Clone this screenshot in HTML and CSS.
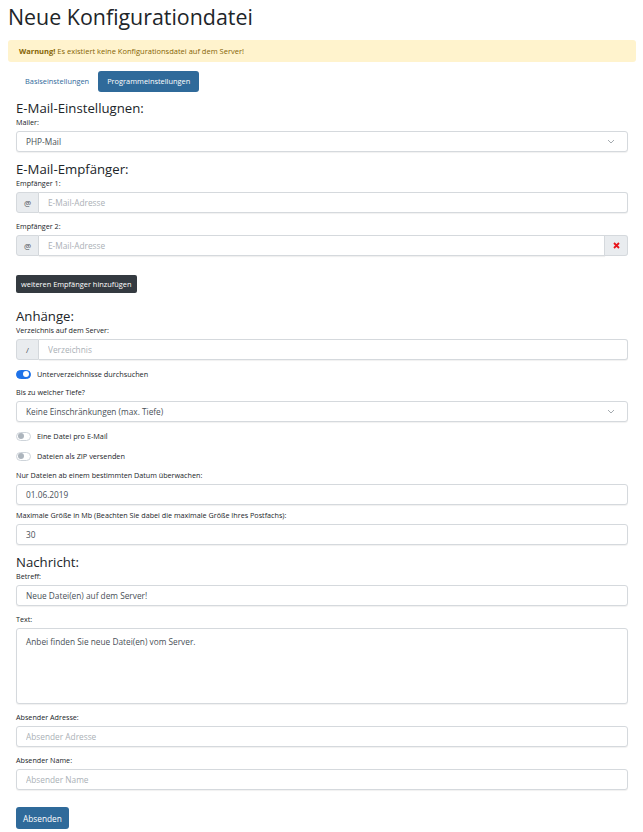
FILE: index.html
```html
<!DOCTYPE html>
<html lang="de">
<head>
    <meta charset="UTF-8">
    <meta name="viewport" content="width=device-width, initial-scale=1.0">
    <title>Neue Konfigurationdatei</title>
    <link rel="stylesheet" href="styles.css">
</head>
<body>
    <h1>Neue Konfigurationdatei</h1>
    <div class="alert"><strong>Warnung!</strong> Es existiert keine Konfigurationsdatei auf dem Server!</div>

    <div class="tabs">
        <a class="tab">Basiseinstellungen</a>
        <a class="tab active">Programmeinstellungen</a>
    </div>

    <form class="config-form">
        <h4>E-Mail-Einstellugnen:</h4>
        <div class="group">
            <label>Mailer:</label>
            <div class="select">
                <span>PHP-Mail</span>
                <svg width="8" height="5" viewBox="0 0 8 5"><path d="M1 1l3 3 3-3" fill="none" stroke="#9aa0a6" stroke-width="0.9"/></svg>
            </div>
        </div>

        <h4>E-Mail-Empfänger:</h4>
        <div class="group">
            <label>Empfänger 1:</label>
            <div class="input-group">
                <span class="addon">@</span>
                <input type="text" placeholder="E-Mail-Adresse">
            </div>
        </div>
        <div class="group">
            <label>Empfänger 2:</label>
            <div class="input-group">
                <span class="addon">@</span>
                <input type="text" placeholder="E-Mail-Adresse">
                <span class="addon addon-right">
                    <svg width="7" height="7" viewBox="0 0 7 7"><path d="M1 1l5 5M6 1l-5 5" stroke="#e8141b" stroke-width="1.8"/></svg>
                </span>
            </div>
        </div>
        <button type="button" class="btn-dark">weiteren Empfänger hinzufügen</button>

        <h4>Anhänge:</h4>
        <div class="group">
            <label>Verzeichnis auf dem Server:</label>
            <div class="input-group">
                <span class="addon">/</span>
                <input type="text" placeholder="Verzeichnis">
            </div>
        </div>
        <div class="switch-row first">
            <span class="switch on"></span>
            <span>Unterverzeichnisse durchsuchen</span>
        </div>
        <div class="group">
            <label>Bis zu welcher Tiefe?</label>
            <div class="select">
                <span>Keine Einschränkungen (max. Tiefe)</span>
                <svg width="8" height="5" viewBox="0 0 8 5"><path d="M1 1l3 3 3-3" fill="none" stroke="#9aa0a6" stroke-width="0.9"/></svg>
            </div>
        </div>
        <div class="switch-row">
            <span class="switch"></span>
            <span>Eine Datei pro E-Mail</span>
        </div>
        <div class="switch-row last">
            <span class="switch"></span>
            <span>Dateien als ZIP versenden</span>
        </div>
        <div class="group short">
            <label>Nur Dateien ab einem bestimmten Datum überwachen:</label>
            <input type="text" value="01.06.2019">
        </div>
        <div class="group">
            <label>Maximale Größe in Mb (Beachten Sie dabei die maximale Größe Ihres Postfachs):</label>
            <input type="text" value="30">
        </div>

        <h4>Nachricht:</h4>
        <div class="group">
            <label>Betreff:</label>
            <input type="text" value="Neue Datei(en) auf dem Server!">
        </div>
        <div class="group">
            <label>Text:</label>
            <textarea>Anbei finden Sie neue Datei(en) vom Server.</textarea>
        </div>
        <div class="group">
            <label>Absender Adresse:</label>
            <input type="text" placeholder="Absender Adresse">
        </div>
        <div class="group">
            <label>Absender Name:</label>
            <input type="text" placeholder="Absender Name">
        </div>
        <button type="button" class="btn-primary">Absenden</button>
    </form>
</body>
</html>
```

FILE: styles.css
```css
body {
    margin: 0;
    padding: 0 7px 0 8px;
    font-family: "Open Sans", "Noto Sans", sans-serif;
    color: #212529;
    background: #ffffff;
}

h1 {
    font-size: 21.4px;
    font-weight: 400;
    line-height: 30px;
    margin: 2px 0 8px;
}

.alert {
    height: 22px;
    line-height: 22px;
    padding: 0 11px;
    font-size: 7.5px;
    color: #856404;
    background-color: #fff3cd;
    border-radius: 3px;
}

.tabs {
    display: flex;
    align-items: center;
    margin: 9px 0 0 8px;
    height: 21px;
}

.tab {
    font-size: 7.4px;
    color: #2f6a9a;
    padding: 0 9px;
    line-height: 21px;
    border-radius: 3px;
}

.tab.active {
    color: #ffffff;
    background-color: #2f6a9a;
}

.config-form {
    padding: 0 8px;
}

h4 {
    font-size: 13.2px;
    font-weight: 400;
    line-height: 18px;
    margin: 7px 0 0;
}

label {
    display: block;
    font-size: 7.2px;
    line-height: 11px;
    margin-bottom: 3px;
}

.group {
    margin-bottom: 8px;
}

.group.short {
    margin-bottom: 5px;
}

input, textarea, .select {
    display: block;
    box-sizing: border-box;
    width: 100%;
    height: 21px;
    padding: 0 9px;
    font-family: inherit;
    font-size: 8.3px;
    color: #495057;
    background: #ffffff;
    border: 1px solid #d5d9dd;
    border-radius: 3px;
    box-shadow: 0 1px 1px rgba(0, 0, 0, 0.06);
    outline: none;
}

input::placeholder {
    color: #aab0b6;
}

textarea {
    height: 76px;
    padding-top: 7px;
    resize: none;
}

.select {
    display: flex;
    align-items: center;
    justify-content: space-between;
    padding-right: 12px;
}

.input-group {
    display: flex;
}

.input-group input {
    flex: 1;
    border-radius: 0 3px 3px 0;
}

.input-group .addon + input {
    border-left: none;
}

.addon {
    display: flex;
    align-items: center;
    justify-content: center;
    width: 23px;
    height: 21px;
    box-sizing: border-box;
    font-size: 8px;
    color: #495057;
    background-color: #e9ecef;
    border: 1px solid #d5d9dd;
    border-radius: 3px 0 0 3px;
}

.input-group .addon-right {
    border-radius: 0 3px 3px 0;
    border-left: none;
}

.input-group input:has(+ .addon-right) {
    border-radius: 0;
}

.btn-dark, .btn-primary {
    font-family: inherit;
    border: none;
    color: #ffffff;
    cursor: pointer;
}

.btn-dark {
    display: block;
    height: 18px;
    padding: 0 5px;
    margin: 19px 0 14px;
    font-size: 7.4px;
    background-color: #343a40;
    border-radius: 2px;
}

.btn-primary {
    height: 22px;
    padding: 0 7px;
    margin: 9px 0 0;
    font-size: 8.3px;
    background-color: #2f6a9a;
    border-radius: 3px;
}

.switch-row {
    display: flex;
    align-items: center;
    gap: 6px;
    height: 12px;
    margin: 1px 0 8px;
    font-size: 7.3px;
}

.switch-row.first {
    margin: 1px 0 7px;
}

.switch-row.last {
    margin-bottom: 8px;
}

.switch {
    width: 15px;
    height: 9px;
    box-sizing: border-box;
    border: 1px solid #ced4da;
    border-radius: 5px;
    background: #ffffff;
    display: flex;
    align-items: center;
    padding: 0 1px;
}

.switch::after {
    content: "";
    width: 6px;
    height: 6px;
    border-radius: 50%;
    background: #adb5bd;
}

.switch.on {
    background: #1f72e8;
    border-color: #1f72e8;
    justify-content: flex-end;
}

.switch.on::after {
    background: #ffffff;
}
```
